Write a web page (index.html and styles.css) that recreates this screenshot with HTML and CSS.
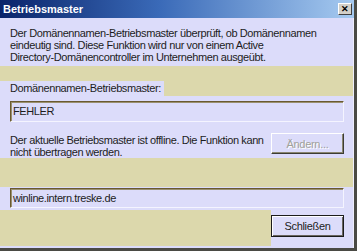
FILE: index.html
```html
<!DOCTYPE html>
<html lang="de">
<head>
  <meta charset="UTF-8" />
  <title>Betriebsmaster</title>
  <link rel="stylesheet" href="styles.css">
</head>
<body>
  <div class="window">
    <div class="titlebar">
      <span class="title">Betriebsmaster</span>
      <span class="close-btn">&#10005;</span>
    </div>

    <div class="frame">
      <div class="intro">
        Der Domänennamen-Betriebsmaster überprüft, ob Domänennamen<br>
        eindeutig sind. Diese Funktion wird nur von einem Active<br>
        Directory-Domänencontroller im Unternehmen ausgeübt.
      </div>

      <div class="band band-small"></div>

      <div class="label-row">
        <span class="label">Domänennamen-Betriebsmaster:</span>
      </div>

      <div class="master">
        <div class="textbox">FEHLER</div>
        <div class="status-row">
          <div class="status">
            Der aktuelle Betriebsmaster ist offline. Die Funktion kann<br>
            nicht übertragen werden.
          </div>
          <button class="btn" disabled>Ändern...</button>
        </div>
      </div>

      <div class="band band-large"></div>

      <div class="server">
        <div class="textbox">winline.intern.treske.de</div>
      </div>

      <div class="footer">
        <div class="footer-fill"></div>
        <div class="footer-actions">
          <button class="btn btn-default">Schließen</button>
        </div>
      </div>
    </div>
  </div>
</body>
</html>
```

FILE: styles.css
```css
body {
  margin: 0;
  font-family: "Liberation Sans", Arial, sans-serif;
  font-size: 11px;
  letter-spacing: -0.4px;
  color: #1c1c1c;
  background: #dcd8ac;
}

.window {
  width: 357px;
  height: 251px;
  box-sizing: border-box;
  display: flex;
  flex-direction: column;
  border-right: 3px solid #4a4a44;
  border-bottom: 3px solid #4a4a44;
  background: #dcdcfa;
}

.titlebar {
  height: 18px;
  flex: none;
  display: flex;
  align-items: center;
  justify-content: space-between;
  padding: 0 2px 0 3px;
  background: linear-gradient(to right, #0a246a 0%, #3a6ab8 45%, #a6caf0 100%);
}

.title {
  color: #ffffff;
  font-weight: bold;
  font-size: 11px;
  letter-spacing: 0;
}

.close-btn {
  width: 14px;
  height: 12px;
  box-sizing: border-box;
  display: flex;
  align-items: center;
  justify-content: center;
  font-size: 9px;
  font-weight: bold;
  letter-spacing: 0;
  color: #000000;
  background: #d4d0c8;
  border: 1px solid;
  border-color: #ffffff #404040 #404040 #ffffff;
}

.frame {
  flex: 1;
  display: flex;
  flex-direction: column;
  border-right: 1px solid #eeeefc;
  padding-bottom: 2px;
}

.intro {
  height: 48px;
  box-sizing: border-box;
  padding: 9px 9px 0 10px;
  line-height: 12px;
}

.band {
  background: #dcd8ac;
  flex: none;
}

.band-small {
  height: 15px;
}

.band-large {
  height: 29px;
}

.label-row {
  height: 15px;
  line-height: 15px;
  background: #dcd8ac;
}

.label {
  display: inline-block;
  padding: 0 3px 0 10px;
  background: #dcdcfa;
}

.master {
  height: 62px;
  box-sizing: border-box;
  padding: 5px 9px 0 10px;
}

.textbox {
  height: 21px;
  box-sizing: border-box;
  padding-left: 2px;
  line-height: 19px;
  border: 1px solid;
  border-color: #6a5a30 #f4f4ff #f4f4ff #6a5a30;
  box-shadow: inset 1px 1px 0 #9a9070;
}

.status-row {
  display: flex;
  justify-content: space-between;
  margin-top: 11px;
}

.status {
  line-height: 12px;
  margin-top: 1px;
  white-space: nowrap;
}

.btn {
  width: 73px;
  height: 21px;
  padding: 0;
  font-family: inherit;
  font-size: 11px;
  letter-spacing: -0.3px;
  color: #1c1c1c;
  background: #dcdcfa;
  border: 1px solid;
  border-color: #ffffff #3c3c34 #3c3c34 #ffffff;
  box-shadow: inset -1px -1px 0 #8a8670;
}

.btn:disabled {
  color: #a0a09a;
  text-shadow: 1px 1px 0 #ffffff;
}

.btn-default {
  height: 22px;
  border: 1px solid #1c1c1c;
  box-shadow: inset 1px 1px 0 #ffffff, inset -1px -1px 0 #6a6660;
}

.server {
  height: 23px;
  box-sizing: border-box;
  padding: 1px 9px 0 10px;
}

.server .textbox {
  height: 20px;
  line-height: 18px;
}

.footer {
  flex: 1;
  display: flex;
}

.footer-fill {
  width: 272px;
  background: #dcd8ac;
}

.footer-actions {
  flex: 1;
  padding: 5px 9px 0 0;
}
```
